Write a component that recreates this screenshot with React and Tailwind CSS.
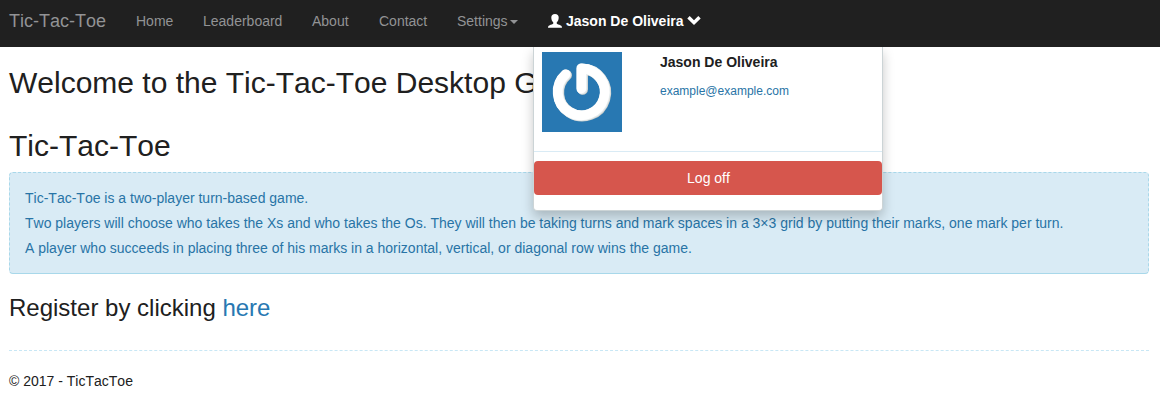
const navItems = [
  { label: 'Home', width: 'w-[67px]' },
  { label: 'Leaderboard', width: 'w-[109px]' },
  { label: 'About', width: 'w-[67px]' },
  { label: 'Contact', width: 'w-[78px]' },
];

function UserIcon() {
  return (
    <svg className="h-[14px] w-[14px] shrink-0" viewBox="0 0 14 14" fill="currentColor" aria-hidden="true">
      <path d="M7 0C4.600 0 3.300 1.400 3.300 3.500c0 2.300.8 4 2 5v1.100c-.4.800-2.200 1-4 1.900C.5 11.900 0 12.500 0 13.700h14c0-1.200-.5-1.800-1.300-2.200-1.800-.9-3.600-1.100-4-1.900V8.500c1.200-1 2-2.700 2-5C10.700 1.400 9.400 0 7 0z" />
    </svg>
  );
}

function ChevronIcon() {
  return (
    <svg className="h-[14px] w-[14px] shrink-0" viewBox="0 0 14 14" fill="currentColor" aria-hidden="true">
      <path d="M2.700 2.100L7 6.200l4.300-4.100 2.400 2.300L7 11 .3 4.400z" />
    </svg>
  );
}

function Avatar() {
  return (
    <svg className="h-20 w-20 shrink-0" viewBox="0 0 80 80" aria-label="Avatar">
      <rect width="80" height="80" fill="#2878b2" />
      <g fill="none" strokeWidth="10.500" strokeLinecap="round" strokeLinejoin="round">
        <path d="M24.700 23.200A23.500 23.500 0 1 0 40.700 17.200V37.500" stroke="#cfcfca" />
        <path d="M24.100 22.700A23.500 23.500 0 1 0 40.100 16.700V37" stroke="#e4ebed" />
        <path d="M23.500 22.300A23.500 23.500 0 1 0 39.300 16.300V36.500" stroke="#fff" strokeWidth="9.800" />
      </g>
    </svg>
  );
}

function UserMenu() {
  return (
    <div className="absolute left-[533px] top-[47px] z-10 h-[164px] w-[350px] rounded-b border-x border-b border-[#ccd4d6] bg-white [clip-path:inset(0_-20px_-20px_-20px)] shadow-[0_6px_12px_rgba(0,0,0,0.22)]">
      <div className="flex h-[104px] pl-2 pt-[5px]">
        <Avatar />
        <div className="ml-[38px]">
          <p className="text-[14px] leading-5 font-bold">Jason De Oliveira</p>
          <p className="mt-[11px] text-[12px] leading-[17px] text-[#2874a6]">example@example.com</p>
        </div>
      </div>
      <hr className="border-t border-[#d9ebf5]" />
      <button className="mt-[9px] block h-[34px] w-full rounded bg-[#d6564d] pl-px text-[14px] leading-[34px] text-white">
        Log off
      </button>
    </div>
  );
}

export default function App() {
  return (
    <div className="relative h-[406px] w-[1160px] overflow-hidden bg-white font-['Liberation_Sans',Arial,sans-serif] text-[14px] leading-5 text-[#202020] [font-kerning:none]">
      <nav className="flex h-[47px] items-start bg-[#202020] pl-[9px] pt-[11px] text-[#929395]">
        <a className="w-[127px] text-[18px] leading-5">Tic-Tac-Toe</a>
        {navItems.map((item) => (
          <a key={item.label} className={item.width}>{item.label}</a>
        ))}
        <a className="flex w-[91px] items-center">
          Settings
          <svg className="ml-[2px] mt-[1px] h-1 w-2" viewBox="0 0 8 4" fill="currentColor" aria-hidden="true">
            <path d="M0 0h8L4 4z" />
          </svg>
        </a>
        <a className="flex items-center font-bold text-white">
          <UserIcon />
          <span className="mr-[3px] ml-1">Jason De Oliveira</span>
          <ChevronIcon />
        </a>
      </nav>

      <UserMenu />

      <main className="pl-[9px] pr-[11px]">
        <h2 className="pt-[19px] text-[30px] leading-[33px]">Welcome to the Tic-Tac-Toe Desktop Game!</h2>
        <h2 className="mt-[30px] text-[30px] leading-[33px]">Tic-Tac-Toe</h2>
        <section className="mt-[10px] h-[102px] rounded border border-dashed border-[#a8d8ea] bg-[#d9ebf5] px-[15px] pt-[13px] leading-[25px] text-[#2874a6] [border-bottom-style:solid]">
          <p>Tic-Tac-Toe is a two-player turn-based game.</p>
          <p>Two players will choose who takes the Xs and who takes the Os. They will then be taking turns and mark spaces in a 3×3 grid by putting their marks, one mark per turn.</p>
          <p>A player who succeeds in placing three of his marks in a horizontal, vertical, or diagonal row wins the game.</p>
        </section>
        <h3 className="mt-[21px] text-[24px] leading-[26px]">
          Register by clicking <a className="text-[#2878b2]">here</a>
        </h3>
        <hr className="mt-[29px] border-t border-dashed border-[#c8e7f5]" />
        <footer className="pt-5">© 2017 - TicTacToe</footer>
      </main>
    </div>
  );
}
